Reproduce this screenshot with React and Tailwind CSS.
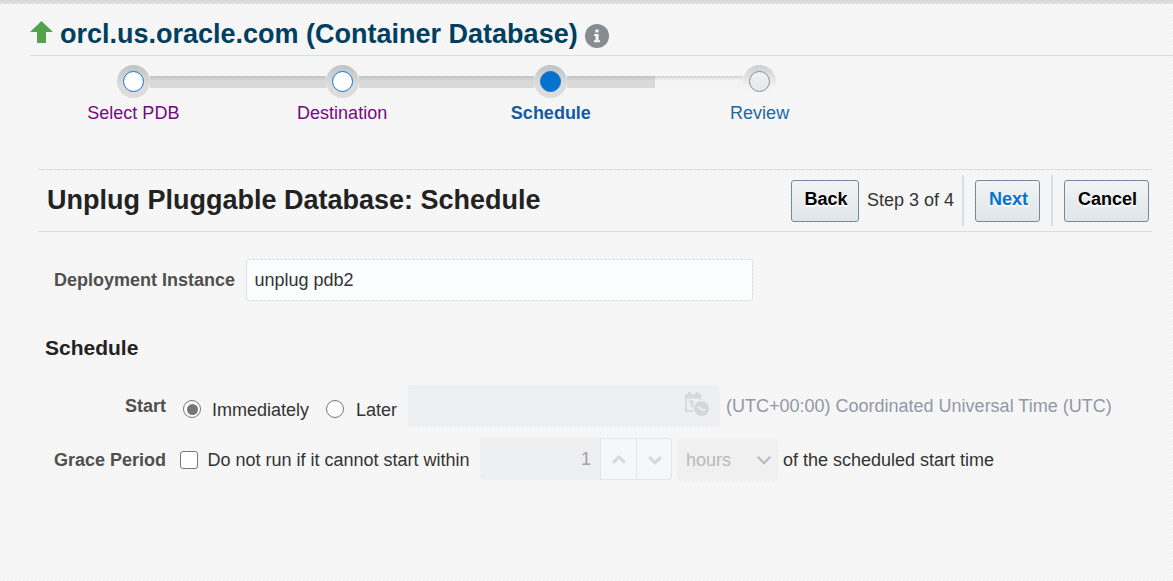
function UpArrow() {
  return (
    <svg className="h-[22px] w-[23px] shrink-0" viewBox="0 0 23 22">
      <path d="M11.5 0 23 11H16v11H7V11H0z" fill="#54a24c" />
    </svg>
  );
}

function InfoIcon() {
  return (
    <svg className="h-6 w-6 shrink-0" viewBox="0 0 24 24">
      <circle cx="12" cy="12" r="12" fill="#878c90" />
      <path d="M10.3 5.6h3.3v2.8h-3.3zM9 10h4.6v6.2h1.5v2H9v-2h1.5v-4.1H9z" fill="#f3f4f4" />
    </svg>
  );
}

function CalendarClock() {
  return (
    <svg className="h-6 w-6" viewBox="0 0 24 24">
      <path d="M0 2h3V0h3v2h4.500V0h3v2h3v6H14.500V6.500H2V18h6v2H0z" fill="#d8d9db" />
      <path d="M4.200 9.200 6 8h2.400v7.500H6V10.400l-1.800.6z" fill="#d8d9db" />
      <circle cx="16.500" cy="16.500" r="7.500" fill="#d5d6d8" />
      <path d="m12.800 14.600 3.700 3 4-.1" fill="none" stroke="#eeeff1" strokeWidth="1.900" />
    </svg>
  );
}

function Chevron({ className, d, width }) {
  return (
    <svg className={className} viewBox="0 0 14 9" fill="none">
      <path d={d} stroke="currentColor" strokeWidth={width} />
    </svg>
  );
}

const DARK = "bg-linear-to-b from-[#c0c4c4] to-[#d9d9d9] to-40%";
const LIGHT = "bg-linear-to-b from-[#cfd2d2] to-[#f3f3f3] to-35%";
const RING_DARK = "bg-linear-to-b from-[#c0c3c5] to-[#dcdcdc] to-60%";
const RING_LIGHT = "bg-linear-to-b from-[#cdcfd0] to-[#f5f5f5] to-70%";

const steps = [
  { label: "Select PDB", left: "", right: DARK, ring: RING_DARK, dot: "border-[#1273cf] bg-white", text: "text-[#740a80]" },
  { label: "Destination", left: DARK, right: DARK, ring: RING_DARK, dot: "border-[#1273cf] bg-white", text: "text-[#740a80]" },
  { label: "Schedule", left: DARK, right: DARK, ring: RING_DARK, dot: "border-[#0572ce] bg-[#0572ce]", text: "font-bold text-[#145c9e]" },
  { label: "Review", left: LIGHT, right: "", ring: RING_LIGHT, dot: "border-[#7b91a5] bg-linear-to-b from-[#f0f2f3] to-[#e4e8ea]", text: "text-[#2466a0]" },
];

function Train() {
  return (
    <nav className="ml-[29px] grid w-[835px] grid-cols-4 pt-[9px]">
      {steps.map((s) => (
        <div key={s.label} className="flex flex-col items-center">
          <div className="flex h-[33px] w-full items-center">
            <div className={`h-3 flex-1 ${s.left}`} />
            <div className={`flex h-[33px] w-[33px] shrink-0 items-center justify-center rounded-full ${s.ring}`}>
              <div className={`h-[21px] w-[21px] rounded-full border ${s.dot}`} />
            </div>
            <div className={`h-3 flex-1 ${s.right}`} />
          </div>
          <span className={`mt-[5px] leading-5 ${s.text}`}>{s.label}</span>
        </div>
      ))}
    </nav>
  );
}

function Button({ className, children }) {
  return (
    <button className={`h-[42px] rounded-[3px] border border-[#748a9e] bg-linear-to-b from-[#f1f3f4] to-[#e2e6e9] pb-[3px] pl-0.5 font-bold [text-shadow:0_1px_0_#fff,0_2px_1px_#fff] ${className}`}>
      {children}
    </button>
  );
}

export default function App() {
  return (
    <div className="h-[581px] w-full overflow-hidden bg-[linear-gradient(45deg,#fafafa_25%,#f2f2f2_25%_50%,#fafafa_50%_75%,#f2f2f2_75%)] bg-[length:4px_4px] font-['Liberation_Sans',Arial,sans-serif] text-lg text-[#333] whitespace-nowrap">
      <div className="h-1 bg-linear-to-b from-[#d8d8d8] to-[#e2e2e2]" />

      <header className="ml-[30px] flex h-[52px] items-start border-b border-[#d5dfe7]">
        <div className="mt-[17px]"><UpArrow /></div>
        <h1 className="mt-3 ml-[7px] w-[518px] text-[27px] leading-9 font-bold text-[#003f5f]">orcl.us.oracle.com (Container Database)</h1>
        <div className="mt-5 ml-[7px]"><InfoIcon /></div>
      </header>

      <Train />

      <section className="mt-[46px] ml-[38px] flex h-[63px] w-[1114px] items-center border-y border-[#d7dfe5] pr-[3px] pl-[9px]">
        <h2 className="mb-0.5 flex-1 text-[27px] leading-8 font-bold text-[#222]">Unplug Pluggable Database: Schedule</h2>
        <Button className="w-[68px] text-black">Back</Button>
        <span className="mb-0.5 ml-2 w-[95px]">Step 3 of 4</span>
        <div className="h-[51px] w-0.5 bg-[#d5dfe7]" />
        <Button className="ml-[11px] w-[65px] text-[#0572ce]">Next</Button>
        <div className="ml-[11px] h-[51px] w-0.5 bg-[#d5dfe7]" />
        <Button className="ml-[11px] w-[85px] text-black">Cancel</Button>
      </section>

      <div className="mt-[27px] ml-[54px] flex h-[42px] items-center">
        <label className="w-48 font-bold text-[#4f4f4f]">Deployment Instance</label>
        <div className="flex h-[42px] w-[507px] items-center rounded-[2px] border border-[#dfe4e7] bg-[#fcfdfe] pl-[7.500px]">unplug pdb2</div>
      </div>

      <h3 className="mt-[33px] ml-[45px] h-7 text-[21px] leading-7 font-bold text-[#222]">Schedule</h3>

      <div className="mt-[23px] flex h-[42px] items-center">
        <label className="w-[166px] text-right font-bold text-[#4f4f4f]">Start</label>
        <div className="mt-1.5 ml-[17px] flex h-[18px] w-[18px] items-center justify-center rounded-full border-[1.500px] border-[#767676] bg-white">
          <div className="h-[11px] w-[11px] rounded-full bg-[#767676]" />
        </div>
        <span className="mt-[7px] ml-[11px] w-[114px]">Immediately</span>
        <div className="mt-1.5 h-[18px] w-[18px] rounded-full border-[1.500px] border-[#767676] bg-white" />
        <span className="mt-[7px] ml-3 w-[52px]">Later</span>
        <div className="flex h-[42px] w-[312px] items-center justify-end rounded-[3px] bg-[#eeeff1] pr-[11px] pb-1">
          <CalendarClock />
        </div>
        <span className="ml-1.5 text-[#9297a5]">(UTC+00:00) Coordinated Universal Time (UTC)</span>
      </div>

      <div className="mt-[11px] flex h-[43px] items-start">
        <label className="mt-2 w-[166px] text-right font-bold text-[#4f4f4f]">Grace Period</label>
        <div className="mt-[13px] ml-3.5 h-[18px] w-[18px] rounded-[3px] border-[1.500px] border-[#767676] bg-white" />
        <span className="mt-2 ml-[9.500px] w-[272.500px]">Do not run if it cannot start within</span>
        <div className="flex h-[42px] w-[192px] overflow-hidden rounded-[3px] bg-[#eeeff1]">
          <div className="w-[120px] pt-[7px] pr-[9px] text-right text-[#a3a3a3]">1</div>
          <div className="flex w-[36px] items-center justify-center border border-r-0 border-[#dfe6ed] bg-[#f5f7f9] pl-px text-[#d6d8da]">
            <Chevron className="h-[9px] w-3.5" d="M1.200 7.600 7 2l5.800 5.600" width="3" />
          </div>
          <div className="flex w-9 items-center justify-center rounded-r-[3px] border border-[#dfe6ed] bg-[#f5f7f9] pl-px text-[#d6d8da]">
            <Chevron className="mt-0.5 h-[9px] w-3.5" d="M1.200 1.200 7 6.800l5.800-5.600" width="3" />
          </div>
        </div>
        <div className="mt-px ml-[5px] flex h-[42px] w-[101px] items-center justify-between rounded-[3px] bg-[#f0f0f1] pr-[7px] pl-[9px] text-[#b9b9b9]">
          <span>hours</span>
          <Chevron className="mt-px h-[9px] w-3.5" d="M.8.800 7 7.300 13.200.800" width="2" />
        </div>
        <span className="mt-2 ml-[5px]">of the scheduled start time</span>
      </div>
    </div>
  );
}
